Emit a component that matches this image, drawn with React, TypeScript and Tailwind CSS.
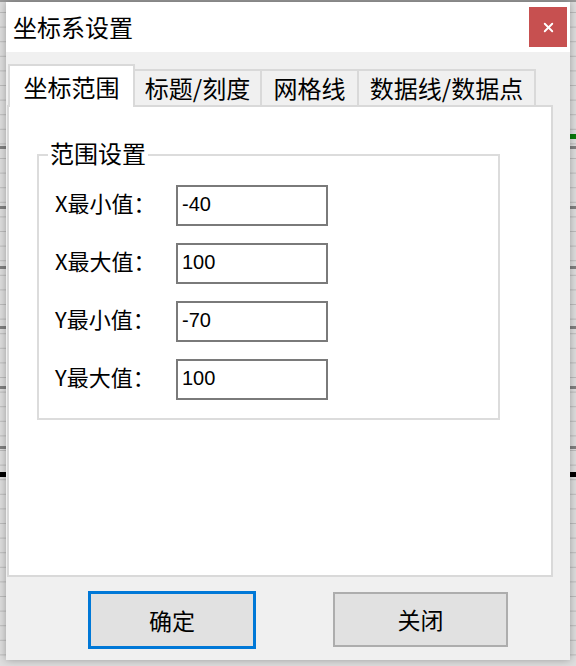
import React, { useState } from "react";
import { X } from "lucide-react";

// tab and field data for the axis settings dialog
const tabs = [
  { label: "坐标范围", width: "w-[127px]" },
  { label: "标题/刻度", width: "w-[127px]" },
  { label: "网格线", width: "w-[97px]" },
  { label: "数据线/数据点", width: "w-[177px]" },
];

const fields = [
  { label: "X最小值：", value: "-40" },
  { label: "X最大值：", value: "100" },
  { label: "Y最小值：", value: "-70" },
  { label: "Y最大值：", value: "100" },
];

// chart that sits behind the dialog
function ChartBackdrop() {
  const light = Array.from({ length: 46 }, (_, i) => 12 + i * 14.6);
  const dark = [146, 206, 266, 326, 386, 446];
  return (
    <svg className="absolute inset-0" width="576" height="666" viewBox="0 0 576 666">
      <rect width="576" height="666" fill="#dedede" />
      <rect width="576" height="2" fill="#9c9c9c" />
      {light.map((y) => (
        <g key={y}>
          <rect x="0" y={y} width="6" height="1" fill="#bdbdbd" />
          <rect x="570" y={y} width="6" height="1" fill="#bdbdbd" />
        </g>
      ))}
      {dark.map((y) => (
        <g key={y}>
          <rect x="0" y={y} width="6" height="3" fill="#808080" />
          <rect x="570" y={y} width="6" height="3" fill="#808080" />
        </g>
      ))}
      <rect x="0" y="472" width="6" height="5" fill="#000" />
      <rect x="570" y="472" width="6" height="5" fill="#000" />
      <rect x="570" y="134" width="6" height="5" fill="#0a7a0a" />
    </svg>
  );
}

export default function App() {
  const [active, setActive] = useState(0);
  const [values, setValues] = useState(fields.map((f) => f.value));

  return (
    <div className="relative w-[576px] h-[666px] overflow-hidden font-['Noto_Sans_CJK_SC',sans-serif] text-black">
      <ChartBackdrop />

      {/* dialog window */}
      <div className="absolute left-[6px] top-[2px] w-[564px] h-[658px] flex flex-col bg-[#f0f0f0] shadow-[0_0_8px_rgba(0,0,0,0.3)]">
        {/* title bar */}
        <div className="h-[50px] bg-white flex justify-between">
          <div className="pl-[7px] flex items-center text-[24px] leading-none">坐标系设置</div>
          <button className="mt-[5px] mr-[3px] w-[38px] h-[40px] bg-[#c75050] flex items-center justify-center">
            <X size={15} strokeWidth={3} color="#ffffff" />
          </button>
        </div>

        {/* tabs + page */}
        <div className="pl-[1px] pt-[12px] flex flex-col">
          <div className="flex items-end h-[41px] pl-[1px] relative z-10">
            {tabs.map((t, i) =>
              i === active ? (
                <div
                  key={t.label}
                  onClick={() => setActive(i)}
                  className={`${t.width} h-[43px] -mb-[2px] bg-white border-2 border-b-0 border-[#d9d9d9] flex items-center justify-center text-[24px] leading-none`}
                >
                  {t.label}
                </div>
              ) : (
                <div
                  key={t.label}
                  onClick={() => setActive(i)}
                  className={`${t.width} h-[36px] bg-[#f0f0f0] border-2 border-b-0 border-l-0 border-[#d9d9d9] flex items-center justify-center text-[24px] leading-none`}
                >
                  {t.label}
                </div>
              )
            )}
          </div>

          <div className="w-[546px] h-[472px] bg-white border-2 border-[#d9d9d9] pl-[28px] pt-[47px]">
            {/* group box */}
            <div className="relative w-[463px] h-[266px] border-2 border-[#dcdcdc] pt-[29px] pl-[16px] flex flex-col gap-[17px]">
              <span className="absolute -top-[15px] left-[9px] bg-white px-[2px] text-[24px] leading-none">范围设置</span>
              {fields.map((f, i) => (
                <div key={f.label} className="flex items-center">
                  <span className="w-[121px] mb-[7px] text-[22px] leading-none">{f.label}</span>
                  <input
                    value={values[i]}
                    onChange={(e) => setValues(values.map((v, j) => (j === i ? e.target.value : v)))}
                    className="w-[152px] h-[41px] border-2 border-[#7a7a7a] px-[4px] pb-[3px] text-[20px] font-['Liberation_Sans',sans-serif] outline-none bg-white"
                  />
                </div>
              ))}
            </div>
          </div>
        </div>

        {/* buttons */}
        <div className="flex items-start pl-[82px] pt-[14px] gap-[77px]">
          <button className="w-[168px] h-[58px] bg-[#e1e1e1] border-[3px] border-[#0078d7] text-[23px] leading-none">确定</button>
          <button className="mt-[1px] w-[175px] h-[55px] bg-[#e1e1e1] border-2 border-[#adadad] text-[23px] leading-none">关闭</button>
        </div>
      </div>
    </div>
  );
}
